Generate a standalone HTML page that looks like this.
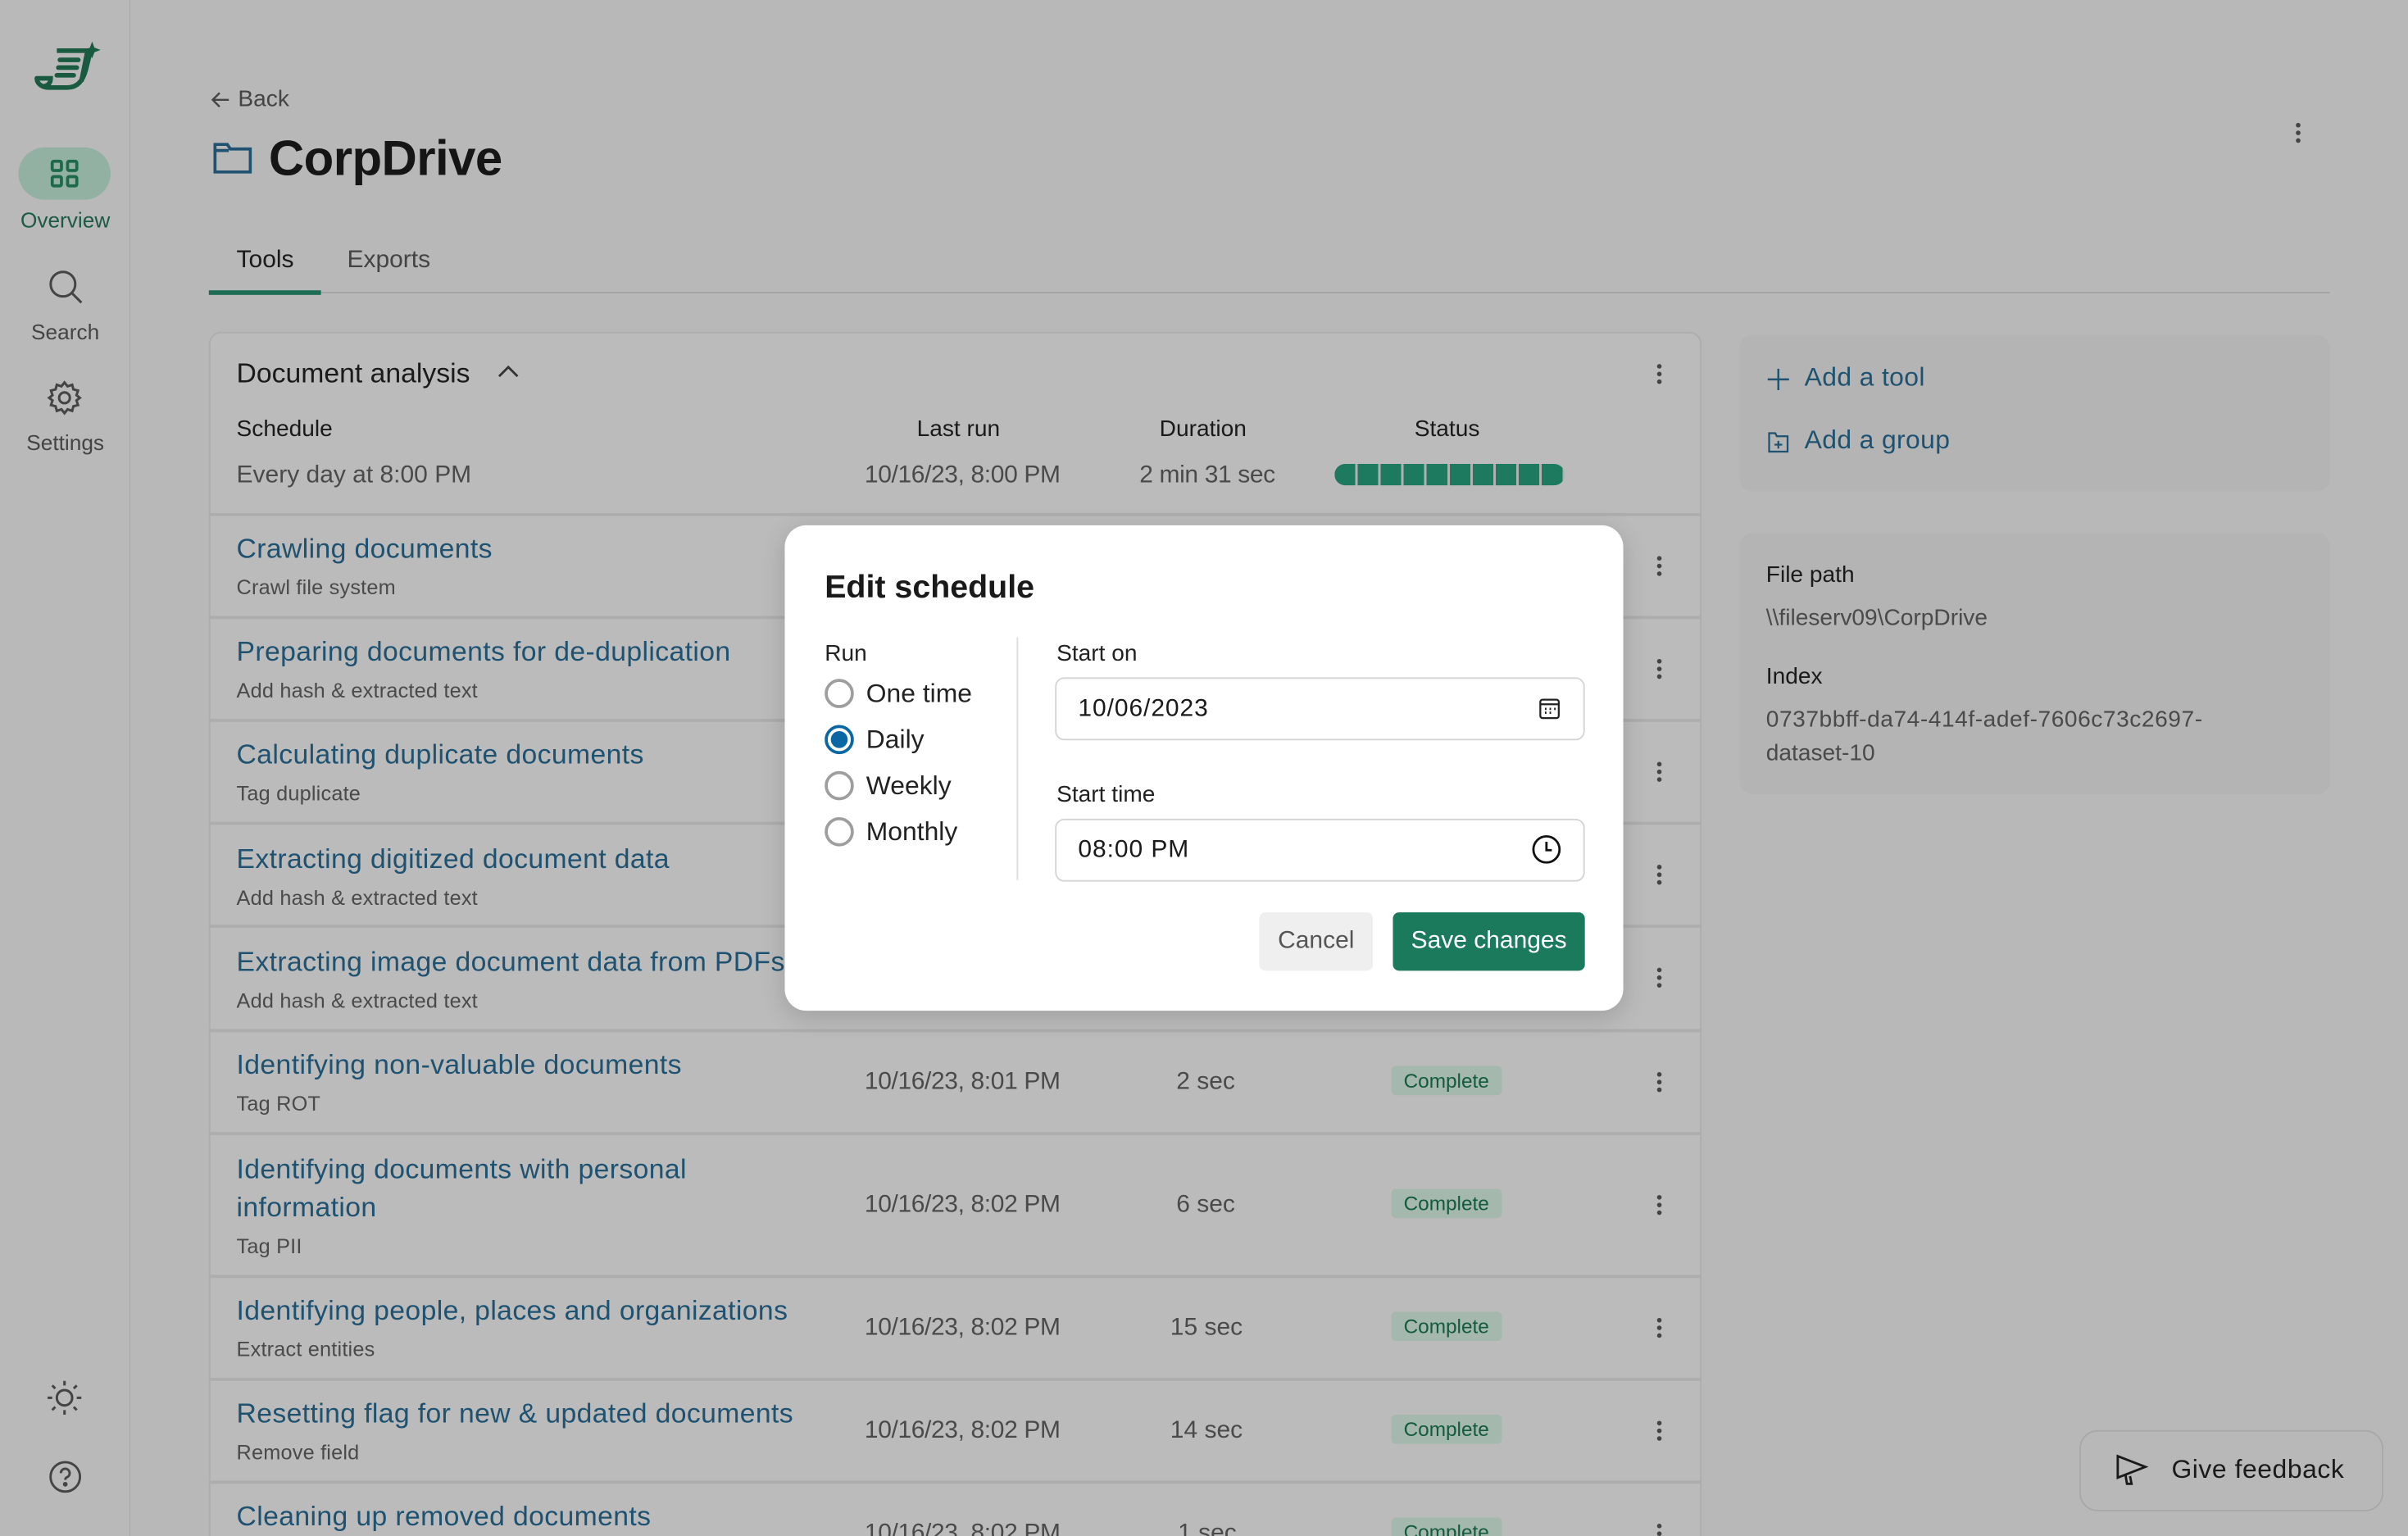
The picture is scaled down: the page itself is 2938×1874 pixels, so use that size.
<!DOCTYPE html>
<html><head><meta charset="utf-8">
<style>
*{box-sizing:border-box;margin:0;padding:0}
html,body{width:2938px;height:1874px;overflow:hidden;background:#b8b8b8}
#s{width:1568px;height:1000px;position:relative;transform:scale(1.87372,1.874);transform-origin:0 0;font-family:"Liberation Sans",sans-serif;color:#1a1a1a;background:#b8b8b8}
.a{position:absolute;white-space:nowrap}
.side{position:absolute;left:0;top:0;width:85px;height:1000px;border-right:1px solid #adadad;background:#b9b9b9}
.nav{position:absolute;left:0;width:85px;text-align:center;font-size:14px;color:#444}
.card{position:absolute;left:136px;top:216px;width:972px;height:800px;background:#bbbbbb;border:1px solid #adadad;border-radius:8px}
.row{position:absolute;left:136px;width:972px;border-top:2px solid #adadad}
.t{color:#1e5270;font-size:18px;letter-spacing:.2px}
.sub{color:#4a4a4a;font-size:13.5px;letter-spacing:.1px}
.g{color:#4a4a4a;font-size:16px}
.d{letter-spacing:-.2px}
.badge{position:absolute;background:#a5b8ad;color:#135a3e;font-size:13px;padding:2px 8px;border-radius:3px}
.keb{position:absolute;left:1079px;width:4px}
.keb i{display:block;width:3px;height:3px;border-radius:50%;background:#444;margin:0 0 2px 0}
.rc{position:absolute;background:#b4b4b4;border-radius:8px}
.modal{position:absolute;left:511px;top:342px;width:546px;height:316px;background:#fff;border-radius:14px;box-shadow:0 4px 16px rgba(0,0,0,.15)}
.radio{position:absolute;width:19px;height:19px;border-radius:50%;border:2px solid #9e9e9e}
.inp{position:absolute;left:176px;width:345px;height:41px;border:1.5px solid #d4d4d4;border-radius:6px;font-size:16px;padding:11px 14px;letter-spacing:.5px}
</style></head><body><div id="s">
<div class="side">
<svg class="a" style="left:20px;top:27px" width="48" height="36" viewBox="0 0 48 36"><path d="M4 24c0 4 4 6 8 6h12c6 0 10-4 12-12l3-12" fill="none" stroke="#1a5a40" stroke-width="3" stroke-linecap="round"/><path d="M17 6h20l-4 20" fill="none" stroke="#1a5a40" stroke-width="3"/><path d="M19 12h12M18 17h12M17 22h11M4 24h9c0 3-2 5-4 5" stroke="#1a5a40" stroke-width="3" fill="none" stroke-linecap="round"/><path d="M40 0l1.5 4 4 1.5-4 1.5-1.5 4-1.5-4-4-1.5 4-1.5z" fill="#1a5a40"/></svg>
<div class="a" style="left:12px;top:96px;width:60px;height:34px;border-radius:17px;background:#93b1a2"></div>
<svg class="a" style="left:32px;top:103px" width="20" height="20" viewBox="0 0 20 20" fill="none" stroke="#1d6a4b" stroke-width="2"><rect x="2" y="2" width="6" height="6" rx="1"/><rect x="12" y="2" width="6" height="6" rx="1"/><rect x="2" y="12" width="6" height="6" rx="1"/><rect x="12" y="12" width="6" height="6" rx="1"/></svg>
<div class="nav" style="top:135px;color:#1d5a45">Overview</div>
<svg class="a" style="left:31px;top:175px" width="24" height="24" viewBox="0 0 24 24" fill="none" stroke="#444" stroke-width="1.6"><circle cx="10" cy="10" r="8"/><path d="M16 16l6 6"/></svg>
<div class="nav" style="top:208px">Search</div>
<svg class="a" style="left:30px;top:247px" width="24" height="24" viewBox="0 0 24 24" fill="none" stroke="#444" stroke-width="1.6"><circle cx="12" cy="12" r="3.5"/><path d="M12 2l2 2.5 3-1 .8 3 3 .8-1 3L22 12l-2.2 1.7 1 3-3 .8-.8 3-3-1L12 22l-2-2.5-3 1-.8-3-3-.8 1-3L2 12l2.2-1.7-1-3 3-.8.8-3 3 1z"/></svg>
<div class="nav" style="top:280px">Settings</div>
<svg class="a" style="left:30px;top:898px" width="24" height="24" viewBox="0 0 24 24" fill="none" stroke="#444" stroke-width="1.6"><circle cx="12" cy="12" r="5"/><path d="M12 1v3M12 20v3M1 12h3M20 12h3M4 4l2 2M18 18l2 2M4 20l2-2M18 6l2-2"/></svg>
<svg class="a" style="left:31px;top:950px" width="23" height="23" viewBox="0 0 24 24" fill="none" stroke="#444" stroke-width="1.6"><circle cx="12" cy="12" r="10"/><path d="M9 9.5a3 3 0 1 1 4 2.8c-.8.4-1 1-1 1.7"/><circle cx="12" cy="17" r=".8" fill="#444"/></svg>
</div>

<svg class="a" style="left:137px;top:59px" width="13" height="12" viewBox="0 0 13 12" fill="none" stroke="#444" stroke-width="1.3"><path d="M12 6H1.5M6 1.5L1.5 6 6 10.5"/></svg>
<div class="a" style="left:155px;top:56px;font-size:15px;color:#444">Back</div>
<svg class="a" style="left:139px;top:93px" width="25" height="20" viewBox="0 0 25 20" fill="none" stroke="#1e5270" stroke-width="2"><path d="M1 1h8l2 3h13v15H1z"/><path d="M1 5h9" /></svg>
<div class="a" style="left:175px;top:85px;font-size:32px;font-weight:bold;color:#151515;letter-spacing:-.3px">CorpDrive</div>
<div class="a" style="left:154px;top:161px;font-size:16px;color:#1a1a1a">Tools</div>
<div class="a" style="left:226px;top:161px;font-size:16px;color:#444">Exports</div>
<div class="a" style="left:136px;top:190px;width:1381px;height:1px;background:#a3a3a3"></div>
<div class="a" style="left:136px;top:189px;width:73px;height:3px;background:#1d6d55"></div>
<div class="a" style="left:1495px;top:80px;width:4px"><i style="display:block;width:3px;height:3px;border-radius:50%;background:#444;margin-bottom:2px"></i><i style="display:block;width:3px;height:3px;border-radius:50%;background:#444;margin-bottom:2px"></i><i style="display:block;width:3px;height:3px;border-radius:50%;background:#444"></i></div>

<div class="card"></div>
<div class="a" style="left:154px;top:233px;font-size:18px">Document analysis</div>
<svg class="a" style="left:323px;top:237px" width="16" height="10" viewBox="0 0 16 10" fill="none" stroke="#333" stroke-width="1.5"><path d="M2 8l6-6 6 6"/></svg>
<div class="keb" style="top:237px"><i></i><i></i><i></i></div>
<div class="a" style="left:154px;top:271px;font-size:15px">Schedule</div>
<div class="a" style="left:597px;top:271px;font-size:15px">Last run</div>
<div class="a" style="left:755px;top:271px;font-size:15px">Duration</div>
<div class="a" style="left:921px;top:271px;font-size:15px">Status</div>
<div class="a g" style="left:154px;top:301px">Every day at 8:00 PM</div>
<div class="a g d" style="left:563px;top:301px">10/16/23, 8:00 PM</div>
<div class="a g d" style="left:742px;top:301px">2 min 31 sec</div>
<div class="a" style="left:869px;top:302px;width:150px;height:14px;border-radius:7px;background:repeating-linear-gradient(90deg,#1d7a5f 0 13.4px,#b0b0b0 13.4px 15px)"></div>

<div class="row" style="top:334px"></div>
<div class="a t" style="left:154px;top:347px">Crawling documents</div><div class="a sub" style="left:154px;top:375px">Crawl file system</div>
<div class="keb" style="top:362px"><i></i><i></i><i></i></div>
<div class="row" style="top:401px"></div>
<div class="a t" style="left:154px;top:414px">Preparing documents for de-duplication</div><div class="a sub" style="left:154px;top:442px">Add hash &amp; extracted text</div>
<div class="keb" style="top:429px"><i></i><i></i><i></i></div>
<div class="row" style="top:468px"></div>
<div class="a t" style="left:154px;top:481px">Calculating duplicate documents</div><div class="a sub" style="left:154px;top:509px">Tag duplicate</div>
<div class="keb" style="top:496px"><i></i><i></i><i></i></div>
<div class="row" style="top:535px"></div>
<div class="a t" style="left:154px;top:549px">Extracting digitized document data</div><div class="a sub" style="left:154px;top:577px">Add hash &amp; extracted text</div>
<div class="keb" style="top:563px"><i></i><i></i><i></i></div>
<div class="row" style="top:602px"></div>
<div class="a t" style="left:154px;top:616px">Extracting image document data from PDFs</div><div class="a sub" style="left:154px;top:644px">Add hash &amp; extracted text</div>
<div class="keb" style="top:630px"><i></i><i></i><i></i></div>
<div class="row" style="top:670px"></div>
<div class="a t" style="left:154px;top:683px">Identifying non-valuable documents</div><div class="a sub" style="left:154px;top:711px">Tag ROT</div>
<div class="a g d" style="left:563px;top:696px">10/16/23, 8:01 PM</div><div class="a g" style="left:766px;top:696px">2 sec</div>
<div class="badge" style="left:906px;top:694px">Complete</div><div class="keb" style="top:698px"><i></i><i></i><i></i></div>
<div class="row" style="top:737px"></div>
<div class="a t" style="left:154px;top:751px">Identifying documents with personal</div>
<div class="a t" style="left:154px;top:776px">information</div><div class="a sub" style="left:154px;top:804px">Tag PII</div>
<div class="a g d" style="left:563px;top:776px">10/16/23, 8:02 PM</div><div class="a g" style="left:766px;top:776px">6 sec</div>
<div class="badge" style="left:906px;top:774px">Complete</div><div class="keb" style="top:778px"><i></i><i></i><i></i></div>
<div class="row" style="top:830px"></div>
<div class="a t" style="left:154px;top:843px">Identifying people, places and organizations</div><div class="a sub" style="left:154px;top:871px">Extract entities</div>
<div class="a g d" style="left:563px;top:856px">10/16/23, 8:02 PM</div><div class="a g" style="left:762px;top:856px">15 sec</div>
<div class="badge" style="left:906px;top:854px">Complete</div><div class="keb" style="top:858px"><i></i><i></i><i></i></div>
<div class="row" style="top:897px"></div>
<div class="a t" style="left:154px;top:910px">Resetting flag for new &amp; updated documents</div><div class="a sub" style="left:154px;top:938px">Remove field</div>
<div class="a g d" style="left:563px;top:923px">10/16/23, 8:02 PM</div><div class="a g" style="left:762px;top:923px">14 sec</div>
<div class="badge" style="left:906px;top:921px">Complete</div><div class="keb" style="top:925px"><i></i><i></i><i></i></div>
<div class="row" style="top:964px"></div>
<div class="a t" style="left:154px;top:977px">Cleaning up removed documents</div>
<div class="a g d" style="left:563px;top:990px">10/16/23, 8:02 PM</div><div class="a g" style="left:767px;top:990px">1 sec</div>
<div class="badge" style="left:906px;top:988px">Complete</div><div class="keb" style="top:992px"><i></i><i></i><i></i></div>

<div class="rc" style="left:1133px;top:218px;width:384px;height:102px"></div>
<svg class="a" style="left:1151px;top:240px" width="14" height="14" viewBox="0 0 14 14" fill="none" stroke="#1e5270" stroke-width="1.3"><path d="M7 0v14M0 7h14"/></svg>
<div class="a t" style="left:1175px;top:236px;font-size:17px">Add a tool</div>
<svg class="a" style="left:1151px;top:281px" width="14" height="14" viewBox="0 0 14 14" fill="none" stroke="#1e5270" stroke-width="1.2"><path d="M1 1h4l1 2h7v10H1z"/><path d="M7 6v5M4.5 8.5h5"/></svg>
<div class="a t" style="left:1175px;top:277px;font-size:17px">Add a group</div>
<div class="rc" style="left:1133px;top:347px;width:384px;height:170px"></div>
<div class="a" style="left:1150px;top:366px;font-size:15px">File path</div>
<div class="a g" style="left:1150px;top:394px;font-size:15px">\\fileserv09\CorpDrive</div>
<div class="a" style="left:1150px;top:432px;font-size:15px">Index</div>
<div class="a g" style="left:1150px;top:460px;font-size:15px;letter-spacing:.3px">0737bbff-da74-414f-adef-7606c73c2697-</div>
<div class="a g" style="left:1150px;top:482px;font-size:15px">dataset-10</div>

<div class="a" style="left:1354px;top:931px;width:198px;height:53px;border:1.5px solid #a8a8a8;border-radius:12px;background:#b8b8b8"></div>
<svg class="a" style="left:1377px;top:945px" width="24" height="24" viewBox="0 0 24 24" fill="none" stroke="#1a1a1a" stroke-width="1.5"><path d="M2 3l18 7-18 7z M7 15l1 6h3l-1-5"/></svg>
<div class="a" style="left:1414px;top:947px;font-size:17px;letter-spacing:.3px">Give feedback</div>

<div class="modal">
<div class="a" style="left:26px;top:29px;font-size:21px;font-weight:bold;color:#1a1a1a">Edit schedule</div>
<div class="a" style="left:26px;top:75px;font-size:15px;color:#222">Run</div>
<div class="radio" style="left:26px;top:100px"></div><div class="a" style="left:53px;top:100px;font-size:17px;color:#222">One time</div>
<div class="radio" style="left:26px;top:130px;border-color:#0a67a3"><div style="width:11px;height:11px;border-radius:50%;background:#0a67a3;margin:2px"></div></div><div class="a" style="left:53px;top:130px;font-size:17px;color:#222">Daily</div>
<div class="radio" style="left:26px;top:160px"></div><div class="a" style="left:53px;top:160px;font-size:17px;color:#222">Weekly</div>
<div class="radio" style="left:26px;top:190px"></div><div class="a" style="left:53px;top:190px;font-size:17px;color:#222">Monthly</div>
<div class="a" style="left:151px;top:73px;width:1px;height:158px;background:#ddd"></div>
<div class="a" style="left:177px;top:75px;font-size:15px;color:#222">Start on</div>
<div class="inp" style="top:99px">10/06/2023</div>
<svg class="a" style="left:491px;top:112px" width="14" height="15" viewBox="0 0 14 15" fill="none" stroke="#222" stroke-width="1.2"><rect x="1" y="1.5" width="12" height="12" rx="1.5"/><path d="M1 4.5h12"/><path d="M4 7.5h1M7 7.5h1M10 7.5h1M4 10h1M7 10h1" stroke-width="1.5"/></svg>
<div class="a" style="left:177px;top:167px;font-size:15px;color:#222">Start time</div>
<div class="inp" style="top:191px">08:00 PM</div>
<svg class="a" style="left:486px;top:201px" width="20" height="20" viewBox="0 0 20 20" fill="none" stroke="#111" stroke-width="1.5"><circle cx="10" cy="10" r="8.5"/><path d="M10 5v5.5h3.5"/></svg>
<div class="a" style="left:309px;top:252px;width:74px;height:38px;background:#efefef;border-radius:4px;font-size:16px;color:#555;text-align:center;line-height:38px">Cancel</div>
<div class="a" style="left:396px;top:252px;width:125px;height:38px;background:#1b7a5c;border-radius:4px;font-size:16px;color:#fff;text-align:center;line-height:38px">Save changes</div>
</div>
</div></body></html>
